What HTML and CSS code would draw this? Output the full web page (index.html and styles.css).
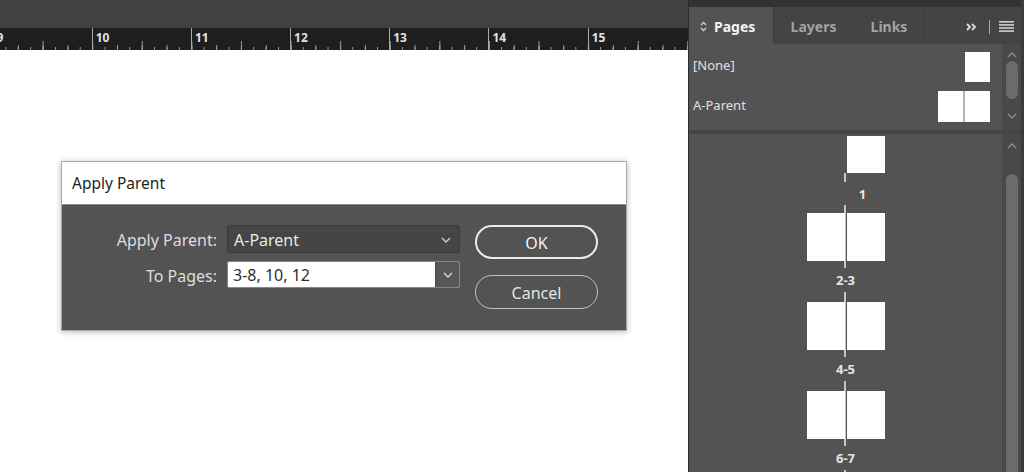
FILE: index.html
```html
<!DOCTYPE html>
<html>
<head>
<meta charset="utf-8">
<title>Apply Parent</title>
<link rel="stylesheet" href="styles.css">
</head>
<body>
<div class="app">
  <div class="workspace">
    <div class="appbar"></div>
    <div class="ruler">
      <div class="ruler-track">
        <div class="rcell"><span>9</span></div>
        <div class="rcell"><span>10</span></div>
        <div class="rcell"><span>11</span></div>
        <div class="rcell"><span>12</span></div>
        <div class="rcell"><span>13</span></div>
        <div class="rcell"><span>14</span></div>
        <div class="rcell"><span>15</span></div>
      </div>
    </div>
    <div class="canvas">
      <div class="dialog">
        <div class="dlg-title">Apply Parent</div>
        <div class="dlg-body">
          <div class="form">
            <label class="flabel">Apply Parent:</label>
            <div class="select">
              <span>A-Parent</span>
              <svg class="chev" width="10" height="6" viewBox="0 0 10 6"><polyline points="1,1 5,5 9,1" fill="none" stroke="#cfcfcf" stroke-width="1.4"/></svg>
            </div>
            <label class="flabel">To Pages:</label>
            <div class="combo">
              <span class="combo-text">3-8, 10, 12</span>
              <span class="combo-btn"><svg width="10" height="6" viewBox="0 0 10 6"><polyline points="1,1 5,5 9,1" fill="none" stroke="#d6d6d6" stroke-width="1.4"/></svg></span>
            </div>
          </div>
          <div class="buttons">
            <div class="btn btn-ok">OK</div>
            <div class="btn btn-cancel">Cancel</div>
          </div>
        </div>
      </div>
    </div>
  </div>

  <div class="panel">
    <div class="tabstrip">
      <div class="tab active">
        <svg class="updown" width="7" height="11" viewBox="0 0 7 11"><polyline points="1,4 3.5,1.5 6,4" fill="none" stroke="#cfcfcf" stroke-width="1.3"/><polyline points="1,7 3.5,9.5 6,7" fill="none" stroke="#cfcfcf" stroke-width="1.3"/></svg>
        <span>Pages</span>
      </div>
      <div class="tab tab-layers">Layers</div>
      <div class="tab tab-links">Links</div>
      <div class="tab-tools">
        <svg width="11" height="8" viewBox="0 0 11 8"><polyline points="1,1 4,4 1,7" fill="none" stroke="#dedede" stroke-width="1.8"/><polyline points="6,1 9,4 6,7" fill="none" stroke="#dedede" stroke-width="1.8"/></svg>
        <span class="vsep"></span>
        <svg width="15" height="11" viewBox="0 0 15 11"><rect x="0" y="0" width="15" height="1.6" fill="#cfcfcf"/><rect x="0" y="3.1" width="15" height="1.6" fill="#cfcfcf"/><rect x="0" y="6.2" width="15" height="1.6" fill="#cfcfcf"/><rect x="0" y="9.3" width="15" height="1.6" fill="#cfcfcf"/></svg>
      </div>
    </div>

    <div class="parents">
      <div class="parents-list">
        <div class="prow">
          <span class="pname">[None]</span>
          <div class="pthumb"><div class="ppg"></div></div>
        </div>
        <div class="prow">
          <span class="pname">A-Parent</span>
          <div class="pthumb"><div class="ppg"></div><div class="ppg"></div></div>
        </div>
      </div>
      <div class="scroll scroll-short">
        <svg class="sc-up" width="10" height="6" viewBox="0 0 10 6"><polyline points="1,5 5,1 9,5" fill="none" stroke="#8c8c8c" stroke-width="1.3"/></svg>
        <div class="sthumb sthumb-short"></div>
        <svg class="sc-down" width="10" height="6" viewBox="0 0 10 6"><polyline points="1,1 5,5 9,1" fill="none" stroke="#8c8c8c" stroke-width="1.3"/></svg>
      </div>
    </div>

    <div class="divider"></div>

    <div class="pages">
      <div class="pages-list">
        <div class="spread first"><div class="pg blank"></div><div class="pg"></div></div>
        <div class="plabel first-label"><span>1</span></div>
        <div class="spread"><div class="pg"></div><div class="pg"></div></div>
        <div class="plabel"><span>2-3</span></div>
        <div class="spread"><div class="pg"></div><div class="pg"></div></div>
        <div class="plabel"><span>4-5</span></div>
        <div class="spread"><div class="pg"></div><div class="pg"></div></div>
        <div class="plabel"><span>6-7</span></div>
        <div class="spread"><div class="pg"></div><div class="pg"></div></div>
      </div>
      <div class="scroll scroll-long">
        <svg class="sc-up" width="10" height="6" viewBox="0 0 10 6"><polyline points="1,5 5,1 9,5" fill="none" stroke="#8c8c8c" stroke-width="1.3"/></svg>
        <div class="sthumb sthumb-long"></div>
      </div>
    </div>
  </div>
</div>
</body>
</html>
```

FILE: styles.css
```css
* { box-sizing: border-box; }

html, body {
  margin: 0;
  padding: 0;
  width: 1024px;
  height: 472px;
  overflow: hidden;
  background: #ffffff;
  font-family: "Noto Sans", "Open Sans", "DejaVu Sans", sans-serif;
}

.app {
  display: flex;
  width: 1024px;
  height: 472px;
}

/* ---------- workspace ---------- */
.workspace {
  width: 688px;
  flex-shrink: 0;
  display: flex;
  flex-direction: column;
  overflow: hidden;
}

.appbar {
  height: 28px;
  background: #414141;
  flex-shrink: 0;
}

.ruler {
  height: 22px;
  background: #1e1e1e;
  overflow: hidden;
  flex-shrink: 0;
}

.ruler-track {
  display: flex;
  height: 22px;
  margin-left: -7.5px;
  width: 700px;
  background-image:
    linear-gradient(to right, #9c9c9c 1px, transparent 1px),
    linear-gradient(to right, #9c9c9c 1px, transparent 1px),
    linear-gradient(to right, #9c9c9c 1px, transparent 1px);
  background-size: 12.4px 3px, 24.8px 5px, 49.6px 9px;
  background-repeat: repeat-x;
  background-position: 0 100%, 0 100%, 0 100%;
}

.rcell {
  width: 99.2px;
  flex-shrink: 0;
  height: 22px;
  border-left: 1px solid #a8a8a8;
  padding: 3px 0 0 3px;
  font-size: 12px;
  line-height: 13px;
}

.rcell span {
  display: block;
  width: max-content;
  background: #1e1e1e;
  font-weight: 700;
  color: #e2e2e2;
}

.canvas {
  flex: 1;
  background: #ffffff;
  padding: 111px 0 0 61px;
}

/* ---------- dialog ---------- */
.dialog {
  width: 566px;
  height: 170px;
  border: 1px solid #a9a9a9;
  box-shadow: 0 1px 6px rgba(0, 0, 0, 0.28);
  display: flex;
  flex-direction: column;
}

.dlg-title {
  height: 43px;
  background: #ffffff;
  border-bottom: 1px solid #8f8f8f;
  padding-left: 10px;
  font-size: 15.5px;
  line-height: 43px;
  color: #1e1e1e;
}

.dlg-body {
  flex: 1;
  background: #535353;
  display: flex;
  align-items: flex-start;
  padding-top: 20px;
}

.form {
  display: grid;
  grid-template-columns: 155px 233px;
  grid-template-rows: 28px 27px;
  column-gap: 10px;
  row-gap: 8px;
}

.flabel {
  align-self: center;
  text-align: right;
  font-size: 16px;
  color: #dedede;
  line-height: 20px;
  padding-top: 2px;
}

.select {
  display: flex;
  align-items: center;
  justify-content: space-between;
  background: #454545;
  border: 1px solid #3a3a3a;
  border-radius: 3px;
  padding: 1px 8px 0 6px;
  font-size: 16px;
  color: #e8e8e8;
}

.combo {
  display: flex;
  background: #ffffff;
  border: 1px solid #4d96d6;
  border-radius: 2px;
  overflow: hidden;
}

.combo-text {
  flex: 1;
  font-size: 16px;
  line-height: 27px;
  color: #2e2e2e;
  padding-left: 5px;
}

.combo-btn {
  width: 24px;
  background: #575757;
  border-left: 1px solid #4a4a4a;
  display: flex;
  align-items: center;
  justify-content: center;
}

.buttons {
  margin-left: 15px;
  display: flex;
  flex-direction: column;
  gap: 16px;
}

.btn {
  width: 123px;
  height: 34px;
  border-radius: 17px;
  display: flex;
  align-items: center;
  justify-content: center;
  font-size: 16px;
  padding-top: 1px;
}

.btn-ok {
  border: 2px solid #ececec;
  color: #f2f2f2;
}

.btn-cancel {
  border: 1.5px solid #c2c2c2;
  color: #e4e4e4;
}

/* ---------- panel ---------- */
.panel {
  width: 336px;
  flex-shrink: 0;
  background: #535353;
  border-left: 1px solid #2c2c2c;
  border-right: 3px solid #3b3b3b;
  display: flex;
  flex-direction: column;
}

.tabstrip {
  height: 44px;
  flex-shrink: 0;
  background: #3e3e3e;
  border-top: 7px solid #323232;
  display: flex;
}

.tab {
  height: 37px;
  display: flex;
  align-items: center;
  justify-content: center;
  font-size: 14px;
  font-weight: 700;
  color: #a3a3a3;
  background: #444444;
  margin-right: 1px;
  padding-top: 2px;
}

.tab.active {
  width: 84px;
  background: #535353;
  color: #f4f4f4;
  justify-content: flex-start;
  padding-left: 11px;
  gap: 7px;
}

.tab-layers { width: 79px; }
.tab-links { width: 70px; }

.tab-tools {
  flex: 1;
  display: flex;
  align-items: center;
  justify-content: flex-end;
  padding: 2px 7px 0 0;
  background: #444444;
}

.vsep {
  width: 1px;
  height: 14px;
  background: #a8a8a8;
  margin: 0 9px 0 12px;
}

.parents {
  height: 86px;
  flex-shrink: 0;
  display: flex;
}

.parents-list {
  flex: 1;
  padding-top: 8px;
  display: flex;
  flex-direction: column;
  gap: 9px;
}

.prow {
  display: flex;
  align-items: center;
  justify-content: space-between;
  padding: 0 12px 0 4px;
}

.pname {
  font-size: 13px;
  color: #e0e0e0;
  margin-bottom: 4px;
}

.pthumb {
  display: flex;
  gap: 2px;
  background: #b4b4b4;
}

.ppg {
  width: 25px;
  height: 30px;
  background: #ffffff;
}

.prow + .prow .ppg { height: 31px; }

.scroll {
  width: 19px;
  flex-shrink: 0;
  background: #494949;
  display: flex;
  flex-direction: column;
  align-items: center;
}

.scroll-short { padding-top: 8px; }
.scroll-long { padding-top: 9px; }

.sthumb {
  width: 12px;
  background: #6b6b6b;
  border-radius: 6px;
}

.sthumb-short { height: 38px; margin-top: 3px; }
.sthumb-long { flex: 1; margin-top: 25px; border-radius: 6px 6px 0 0; }

.sc-down { margin-top: 14px; }

.divider {
  height: 4px;
  flex-shrink: 0;
  background: #454545;
}

.pages {
  flex: 1;
  display: flex;
  overflow: hidden;
}

.pages-list {
  flex: 1;
  display: flex;
  flex-direction: column;
  align-items: stretch;
  background-image: linear-gradient(to right,
    transparent calc(50% - 1px),
    #c6c6c6 calc(50% - 1px),
    #c6c6c6 calc(50% + 1px),
    transparent calc(50% + 1px));
  background-repeat: no-repeat;
}

.spread {
  display: flex;
  justify-content: center;
  gap: 2px;
  height: 48px;
  flex-shrink: 0;
}

.spread + .plabel { margin-top: 7px; }
.plabel + .spread { margin-top: 10px; }

.pg {
  width: 38px;
  background: #ffffff;
}

.spread.first {
  height: 39px;
  padding-top: 2px;
  background: #535353;
  margin-bottom: 2px;
}

.pg.blank { background: #535353; }

.plabel {
  height: 24px;
  flex-shrink: 0;
  background: #535353;
  display: flex;
  align-items: center;
  justify-content: center;
  font-size: 13px;
  font-weight: 700;
  color: #e4e4e4;
}

.first-label { height: 23px; }
.first-label + .spread { margin-top: 8px; }
.first-label span { margin-left: 34px; }
```
